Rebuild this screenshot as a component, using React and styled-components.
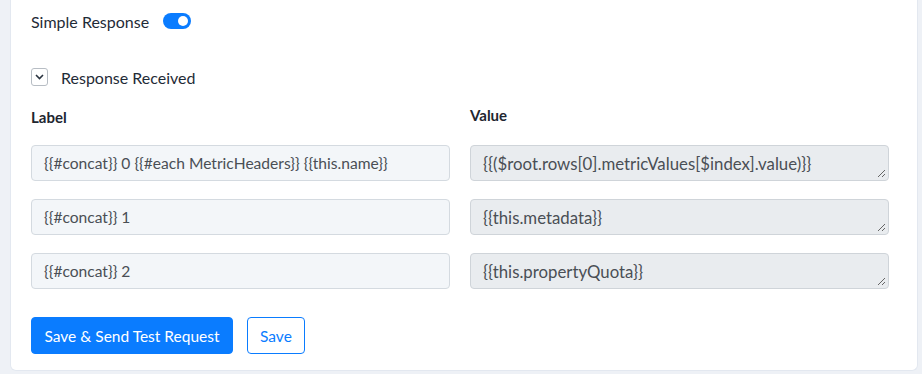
import React from 'react'
import styled, { createGlobalStyle } from 'styled-components'

const GlobalStyle = createGlobalStyle`
  html, body {
    margin: 0;
    padding: 0;
    background: #eef1f6;
    font-family: Lato, "Open Sans", sans-serif;
    color: #1e2a36;
  }
`

const Page = styled.div`
  padding: 0 4px 3px 10px;
  width: 922px;
  box-sizing: border-box;
`

const Card = styled.div`
  background: #fff;
  border: 1px solid #e3e8f0;
  border-top: none;
  border-radius: 0 0 6px 6px;
  padding: 10px 28px 16px 20px;
  height: 371px;
  box-sizing: border-box;
`

const Row = styled.div`
  display: flex;
  align-items: center;
  gap: ${({ gap }) => gap || 14}px;
  height: ${({ h }) => h}px;
  margin-top: ${({ top }) => top || 0}px;
`

const Text = styled.span`
  font-size: 16px;
  color: #1f2b37;
`

const Toggle = styled.span`
  width: 28px;
  height: 16px;
  border-radius: 8px;
  background: #0a7cff;
  position: relative;
  display: inline-block;
  &::after {
    content: '';
    position: absolute;
    top: 3px;
    right: 3px;
    width: 10px;
    height: 10px;
    border-radius: 50%;
    background: #fff;
  }
`

const ChevronBox = styled.span`
  width: 15px;
  height: 16px;
  border: 1px solid #b7bdc4;
  border-radius: 3px;
  display: inline-flex;
  align-items: center;
  justify-content: center;
`

const Grid = styled.div`
  display: grid;
  grid-template-columns: 419px 419px;
  column-gap: 20px;
  row-gap: 18px;
  margin-top: ${({ top }) => top || 0}px;
`

const Head = styled.div`
  font-size: 15px;
  font-weight: 700;
  color: #1e2630;
  height: 18px;
  margin-top: ${({ offset }) => offset || 0}px;
  margin-bottom: 19px;
`

const Field = styled.div`
  height: 36px;
  box-sizing: border-box;
  border: 1px solid ${({ disabled }) => (disabled ? '#cfd4d9' : '#d4dae0')};
  background: ${({ disabled }) => (disabled ? '#e9ecef' : '#f3f6f9')};
  border-radius: 4px;
  padding: 0 12px;
  display: flex;
  align-items: center;
  font-size: ${({ disabled }) => (disabled ? 16.8 : 15.6)}px;
  color: #4a4f55;
  position: relative;
  white-space: nowrap;
`

const Grip = styled.svg`
  position: absolute;
  right: 2px;
  bottom: 2px;
`

const Buttons = styled.div`
  display: flex;
  gap: 14px;
  margin-top: 28px;
`

const Button = styled.button`
  height: 37px;
  padding: 0 ${({ primary }) => (primary ? 12.5 : 12)}px;
  border-radius: 4px;
  font-family: Lato, sans-serif;
  font-size: 15.5px;
  border: 1px solid #0a7cff;
  background: ${({ primary }) => (primary ? '#0a7cff' : '#fff')};
  color: ${({ primary }) => (primary ? '#fff' : '#0a7cff')};
`

const Chevron = () => (
  <svg width="9" height="6" viewBox="0 0 9 6">
    <path d="M1 1l3.5 3.5L8 1" fill="none" stroke="#2a3440" strokeWidth="1.6" />
  </svg>
)

const ResizeGrip = () => (
  <Grip width="9" height="9" viewBox="0 0 9 9">
    <path d="M8 1L1 8M8 5L5 8" stroke="#666" strokeWidth="1" />
  </Grip>
)

const rows = [
  ['{{#concat}} 0 {{#each MetricHeaders}} {{this.name}}', '{{($root.rows[0].metricValues[$index].value)}}'],
  ['{{#concat}} 1', '{{this.metadata}}'],
  ['{{#concat}} 2', '{{this.propertyQuota}}'],
]

export default function App() {
  return (
    <Page>
      <GlobalStyle />
      <Card>
        <Row h={22} gap={14}>
          <Text>Simple Response</Text>
          <Toggle />
        </Row>
        <Row h={22} gap={13} top={34}>
          <ChevronBox><Chevron /></ChevronBox>
          <Text>Response Received</Text>
        </Row>
        <Grid top={18}>
          <Head offset={2}>Label</Head>
          <Head>Value</Head>
        </Grid>
        <Grid>
          {rows.map(([label, value]) => (
            <React.Fragment key={label}>
              <Field>{label}</Field>
              <Field disabled>
                {value}
                <ResizeGrip />
              </Field>
            </React.Fragment>
          ))}
        </Grid>
        <Buttons>
          <Button primary>Save &amp; Send Test Request</Button>
          <Button>Save</Button>
        </Buttons>
      </Card>
    </Page>
  )
}
